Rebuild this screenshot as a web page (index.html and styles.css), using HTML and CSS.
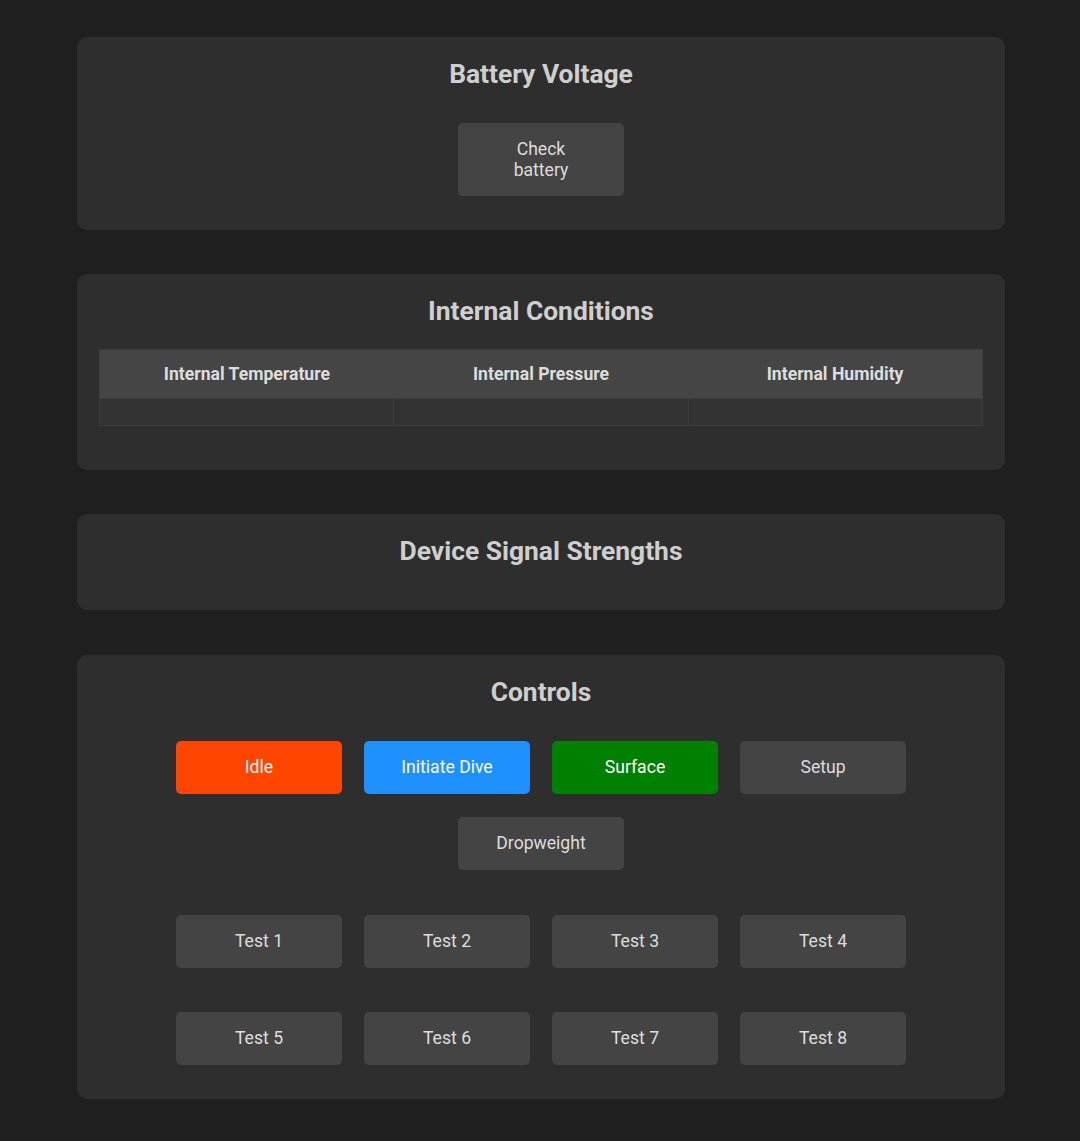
FILE: index.html
```html
<!DOCTYPE html>
<html lang="en">
<head>
<meta charset="utf-8">
<title>Dashboard</title>
<link rel="stylesheet" href="styles.css">
</head>
<body>
<main class="page">
  <section class="card">
    <h2 class="card-title">Battery Voltage</h2>
    <div class="center-row">
      <button class="btn">Check battery</button>
    </div>
  </section>

  <section class="card">
    <h2 class="card-title">Internal Conditions</h2>
    <table class="cond-table">
      <thead>
        <tr><th>Internal Temperature</th><th>Internal Pressure</th><th>Internal Humidity</th></tr>
      </thead>
      <tbody>
        <tr><td></td><td></td><td></td></tr>
      </tbody>
    </table>
  </section>

  <section class="card">
    <h2 class="card-title">Device Signal Strengths</h2>
  </section>

  <section class="card card-spaced">
    <h2 class="card-title">Controls</h2>
    <div class="btn-group">
      <button class="btn btn-idle">Idle</button>
      <button class="btn btn-dive">Initiate Dive</button>
      <button class="btn btn-surface">Surface</button>
      <button class="btn">Setup</button>
      <button class="btn">Dropweight</button>
    </div>
    <div class="btn-group test-group">
      <button class="btn">Test 1</button>
      <button class="btn">Test 2</button>
      <button class="btn">Test 3</button>
      <button class="btn">Test 4</button>
    </div>
    <div class="btn-group test-group-2">
      <button class="btn">Test 5</button>
      <button class="btn">Test 6</button>
      <button class="btn">Test 7</button>
      <button class="btn">Test 8</button>
    </div>
  </section>
</main>
</body>
</html>
```

FILE: styles.css
```css
html, body {
  margin: 0;
  padding: 0;
  background: #1f1f1f;
  font-family: Roboto, "Liberation Sans", Arial, sans-serif;
  color: #ddd;
}

.page {
  display: flex;
  flex-direction: column;
  align-items: center;
  gap: 44px;
  padding: 37px 0 42px 2px;
}

.card {
  box-sizing: border-box;
  width: 928px;
  background: #2e2e2e;
  border-radius: 10px;
  padding: 21px 22px 22px;
}

.card-spaced { margin-top: 1px; }

.card-title {
  margin: 0 0 21px;
  font-size: 26.4px;
  line-height: 32px;
  font-weight: 700;
  color: #cfcfcf;
  text-align: center;
}

.center-row {
  display: flex;
  justify-content: center;
  margin: 33px 0 12px;
}

.btn {
  box-sizing: border-box;
  width: 166px;
  min-height: 53px;
  padding: 16px 30px;
  border: none;
  border-radius: 5px;
  background: #444;
  color: #ddd;
  font-family: Roboto, "Liberation Sans", Arial, sans-serif;
  font-size: 17.6px;
  line-height: 20.5px;
}

.btn-idle { background: #ff4500; color: #fff; }
.btn-dive { background: #1e90ff; color: #fff; }
.btn-surface { background: #008000; color: #fff; }

.cond-table {
  width: 100%;
  border-collapse: collapse;
  table-layout: fixed;
  margin: 22px 0 22px;
  border: 1px solid #3c3c3c;
}

.cond-table th {
  background: #454545;
  color: #ddd;
  font-size: 17.6px;
  font-weight: 700;
  height: 49px;
  padding: 0 10px;
  text-align: center;
  box-sizing: border-box;
}

.cond-table td {
  background: #333;
  border: 1px solid #3c3c3c;
  height: 27px;
  padding: 0;
  box-sizing: border-box;
}

.btn-group {
  display: flex;
  flex-wrap: wrap;
  justify-content: center;
  gap: 23px 22px;
  width: 730px;
  margin: 33px auto 0;
}

.test-group { margin-top: 45px; }
.test-group-2 { margin-top: 44px; margin-bottom: 12px; }
```
